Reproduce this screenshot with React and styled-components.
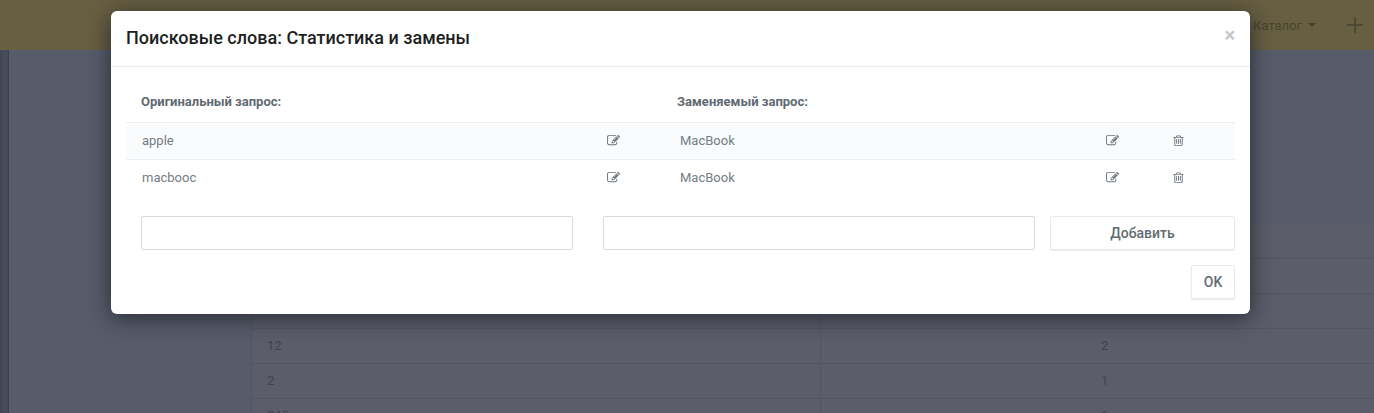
import React from "react";
import styled, { createGlobalStyle } from "styled-components";

const Global = createGlobalStyle`
  html, body { margin: 0; padding: 0; height: 413px; overflow: hidden; background: #575c6b; }
  * { box-sizing: border-box; }
  body { font-family: Roboto, "Liberation Sans", sans-serif; }
`;

const Page = styled.div`
  height: 413px;
  overflow: hidden;
  display: flex;
  flex-direction: column;
`;

const TopBar = styled.header`
  height: 50px;
  flex: none;
  background: #675f42;
  display: flex;
  align-items: center;
  justify-content: flex-end;
  padding-right: 11px;
  gap: 31px;
  color: #3f3c30;
`;

const TopMenu = styled.span`
  font-size: 13px;
  display: inline-flex;
  align-items: center;
  gap: 6px;
  color: #46432f;
`;

const Caret = styled.i`
  width: 0;
  height: 0;
  border-left: 4px solid transparent;
  border-right: 4px solid transparent;
  border-top: 4px solid #46432f;
`;

const PlusIcon = styled.svg`
  width: 16px;
  height: 16px;
  stroke: #46432f;
  stroke-width: 1.5;
`;

const Workspace = styled.div`
  flex: 1;
  display: flex;
`;

const Rail = styled.aside`
  width: 9px;
  flex: none;
  background: #474c5c;
  border-left: 2px solid #414656;
  border-right: 1px solid #3c4152;
`;

const Main = styled.main`
  flex: 1;
  padding: 174px 0 0 242px;
`;

const BgRow = styled.div`
  display: grid;
  grid-template-columns: 568px 281px 1fr;
  height: 35px;
  align-items: center;
  background: #5b5d6a;
  border-bottom: 1px solid #535563;
  border-left: 1px solid #535664;
  font-size: 13px;
  color: #414451;
`;

const BgCell = styled.span`
  padding: 0 0 2px 15px;
  height: 100%;
  display: flex;
  align-items: center;
  &:nth-child(2) { border-left: 1px solid #535563; }
  &:nth-child(3) { padding-left: 0; }
`;

const Modal = styled.section`
  position: absolute;
  left: 111px;
  top: 11px;
  width: 1139px;
  height: 303px;
  background: #fff;
  border-radius: 6px;
  box-shadow: 0 4px 22px rgba(20, 22, 30, 0.7);
  display: flex;
  flex-direction: column;
`;

const ModalHeader = styled.div`
  height: 56px;
  flex: none;
  border-bottom: 1px solid #e9ecef;
  padding: 0 15px 2px;
  display: flex;
  align-items: center;
  justify-content: space-between;
`;

const Title = styled.h4`
  margin: 0;
  font-size: 18px;
  font-weight: 500;
  color: #1d1f22;
`;

const Close = styled.span`
  font-size: 20px;
  font-weight: 700;
  color: #c4c6c8;
  line-height: 1;
  transform: translateY(-3px);
`;

const ModalBody = styled.div`
  padding: 0 15px;
  flex: 1;
  display: flex;
  flex-direction: column;
`;

const HeadRow = styled.div`
  height: 55px;
  padding: 14px 0 0 15px;
  display: grid;
  grid-template-columns: 536px 1fr;
  align-items: center;
  font-size: 13px;
  font-weight: 700;
  color: #5f6a72;
`;

const Row = styled.div`
  height: 37px;
  padding-bottom: 2px;
  display: grid;
  grid-template-columns: 481px 72px 427px 66px 63px;
  align-items: center;
  border-top: 1px solid #eceef0;
  background: ${(p) => (p.$striped ? "#f9fbfc" : "#fff")};
  font-size: 13px;
  color: #757d84;
`;

const NameCell = styled.span`
  padding-left: ${(p) => (p.$first ? "16px" : "1px")};
`;

const IconCell = styled.span`
  display: flex;
  align-items: center;
  color: #6c757d;
`;

const Icon = styled.svg`
  display: block;
  width: ${(p) => p.$w}px;
  height: ${(p) => p.$h}px;
  fill: currentColor;
`;

const EditIcon = () => (
  <Icon $w={14} $h={13} viewBox="0 0 1920 1792">
    <path d="M888 1184l116-116-152-152-116 116v56h96v96h56zm440-720q-16-16-33 1l-350 350q-17 17-1 33t33-1l350-350q17-17 1-33zm80 594v190q0 119-84.5 203.5t-203.5 84.5h-832q-119 0-203.5-84.5t-84.5-203.5v-832q0-119 84.5-203.5t203.5-84.5h832q63 0 117 25 15 7 18 23 3 17-9 29l-49 49q-14 14-32 8-23-6-45-6h-832q-66 0-113 47t-47 113v832q0 66 47 113t113 47h832q66 0 113-47t47-113v-126q0-13 9-22l64-64q15-15 35-7t20 29zm-96-738l288 288-672 672h-288v-288zm444 132l-92 92-288-288 92-92q28-28 68-28t68 28l152 152q28 28 28 68t-28 68z" />
  </Icon>
);

const TrashIcon = () => (
  <Icon $w={13} $h={13} viewBox="0 0 1792 1792">
    <path d="M704 736v576q0 14-9 23t-23 9h-64q-14 0-23-9t-9-23v-576q0-14 9-23t23-9h64q14 0 23 9t9 23zm256 0v576q0 14-9 23t-23 9h-64q-14 0-23-9t-9-23v-576q0-14 9-23t23-9h64q14 0 23 9t9 23zm256 0v576q0 14-9 23t-23 9h-64q-14 0-23-9t-9-23v-576q0-14 9-23t23-9h64q14 0 23 9t9 23zm128 724v-948h-896v948q0 22 7 40.5t14.5 27 10.5 8.5h832q3 0 10.5-8.5t14.5-27 7-40.5zm-672-1076h448l-48-117q-7-9-17-11h-317q-10 2-17 11zm928 32v64q0 14-9 23t-23 9h-96v948q0 83-47 143.5t-113 60.5h-832q-66 0-113-47t-47-113v-952h-96q-14 0-23-9t-9-23v-64q0-14 9-23t23-9h309l70-167q15-37 54-63t79-26h320q40 0 79 26t54 63l70 167h309q14 0 23 9t9 23z" />
  </Icon>
);

const FormRow = styled.div`
  display: flex;
  gap: 15px;
  margin-top: 20px;
  padding-left: 15px;
`;

const Inputs = styled.div`
  display: flex;
  gap: 30px;
`;

const TextInput = styled.input`
  width: 432px;
  height: 34px;
  border: 1px solid #d9dcdd;
  border-radius: 2px;
  background: #fff;
  outline: none;
`;

const Button = styled.button`
  height: 34px;
  width: ${(p) => p.$w}px;
  font-family: inherit;
  font-size: 14px;
  font-weight: 500;
  color: #636c72;
  background: #fff;
  border: 1px solid #e8e9ea;
  border-radius: 2px;
  box-shadow: 0 1px 1px rgba(0, 0, 0, 0.08);
  padding: 0;
`;

const Footer = styled.div`
  display: flex;
  justify-content: flex-end;
  margin-top: 15px;
`;

const rows = [
  { a: "apple", b: "MacBook", striped: true },
  { a: "macbooc", b: "MacBook", striped: false },
];

const bgRows = [
  ["", ""], ["", ""], ["", ""], ["12", "2"], ["2", "1"], ["245", "1"],
];

export default function App() {
  return (
    <>
      <Global />
      <Page>
        <TopBar>
          <TopMenu>Каталог <Caret /></TopMenu>
          <PlusIcon viewBox="0 0 16 16"><path d="M8 0v16M0 8h16" /></PlusIcon>
        </TopBar>
        <Workspace>
          <Rail />
          <Main>
            {bgRows.map((r, i) => (
              <BgRow key={i}>
                <BgCell>{r[0]}</BgCell>
                <BgCell />
                <BgCell>{r[1]}</BgCell>
              </BgRow>
            ))}
          </Main>
        </Workspace>
        <Modal>
          <ModalHeader>
            <Title>Поисковые слова: Статистика и замены</Title>
            <Close>×</Close>
          </ModalHeader>
          <ModalBody>
            <HeadRow>
              <span>Оригинальный запрос:</span>
              <span>Заменяемый запрос:</span>
            </HeadRow>
            {rows.map((r) => (
              <Row key={r.a} $striped={r.striped}>
                <NameCell $first>{r.a}</NameCell>
                <IconCell><EditIcon /></IconCell>
                <NameCell>{r.b}</NameCell>
                <IconCell><EditIcon /></IconCell>
                <IconCell><TrashIcon /></IconCell>
              </Row>
            ))}
            <FormRow>
              <Inputs>
                <TextInput />
                <TextInput />
              </Inputs>
              <Button $w={185}>Добавить</Button>
            </FormRow>
            <Footer>
              <Button $w={44}>OK</Button>
            </Footer>
          </ModalBody>
        </Modal>
      </Page>
    </>
  );
}
